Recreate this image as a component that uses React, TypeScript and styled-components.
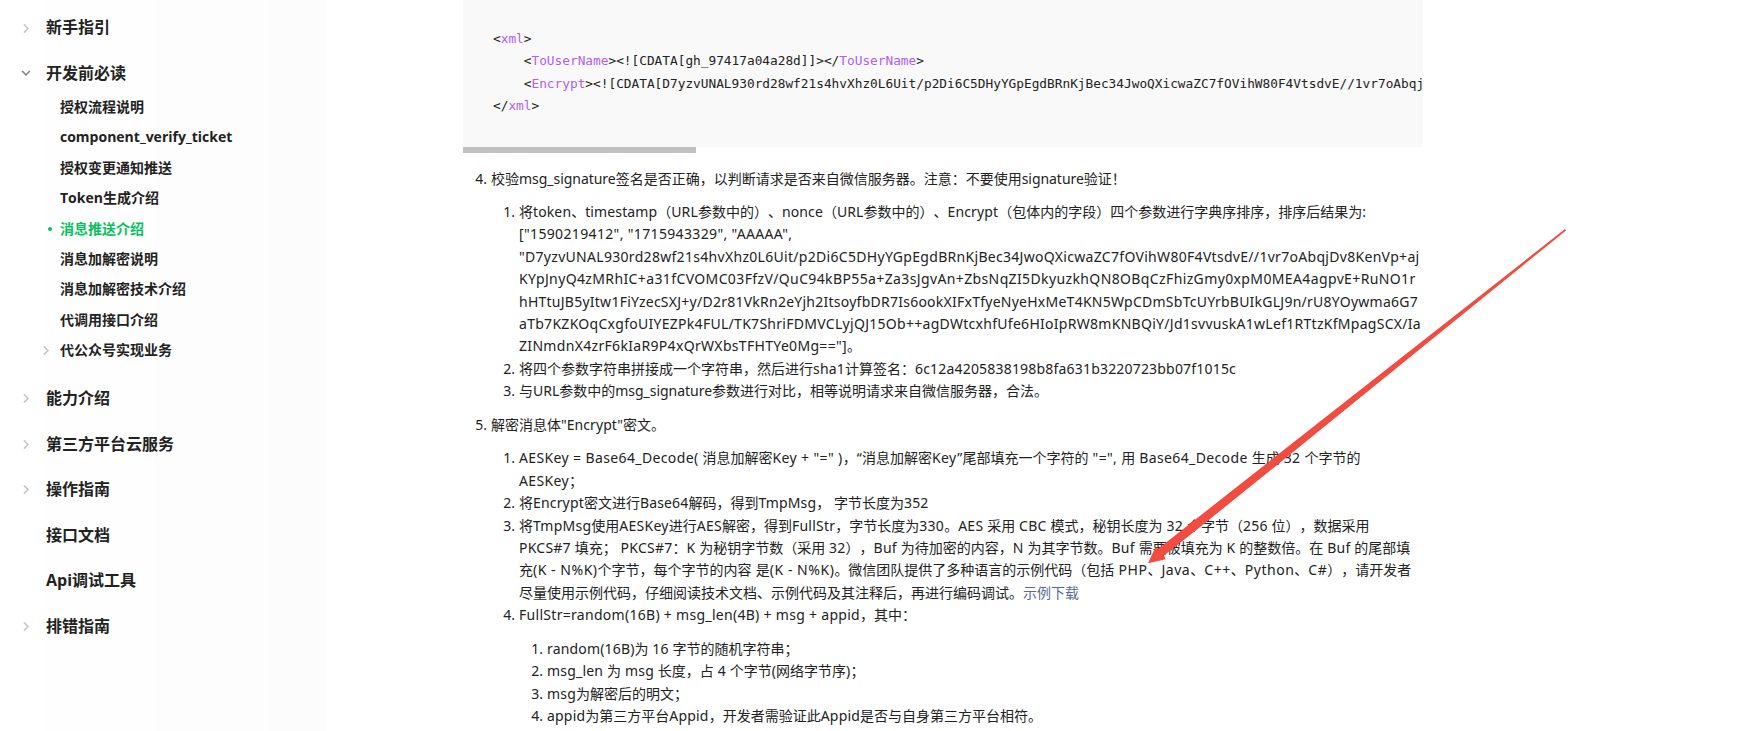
import React from "react";
import styled, { createGlobalStyle } from "styled-components";

type NavChild = { label: string; active?: boolean; arrow?: boolean };
type NavGroup = { label: string; arrow?: "right" | "down"; children?: NavChild[] };

const nav: NavGroup[] = [
  { label: "新手指引", arrow: "right" },
  {
    label: "开发前必读",
    arrow: "down",
    children: [
      { label: "授权流程说明" },
      { label: "component_verify_ticket" },
      { label: "授权变更通知推送" },
      { label: "Token生成介绍" },
      { label: "消息推送介绍", active: true },
      { label: "消息加解密说明" },
      { label: "消息加解密技术介绍" },
      { label: "代调用接口介绍" },
      { label: "代公众号实现业务", arrow: true },
    ],
  },
  { label: "能力介绍", arrow: "right" },
  { label: "第三方平台云服务", arrow: "right" },
  { label: "操作指南", arrow: "right" },
  { label: "接口文档" },
  { label: "Api调试工具" },
  { label: "排错指南", arrow: "right" },
];

// tracking of the latin runs, one value per line
type TextLine = { text: string; track: number; link?: string };
type DocItem = { lines: TextLine[]; items?: DocItem[] };

const one = (text: string, track: number): DocItem => ({ lines: [{ text, track }] });

const signItems: DocItem[] = [
  {
    lines: [
      { text: "将token、timestamp（URL参数中的）、nonce（URL参数中的）、Encrypt（包体内的字段）四个参数进行字典序排序，排序后结果为:", track: 0.123 },
      { text: '["1590219412", "1715943329", "AAAAA",', track: 0.35 },
      { text: '"D7yzvUNAL930rd28wf21s4hvXhz0L6Uit/p2Di6C5DHyYGpEgdBRnKjBec34JwoQXicwaZC7fOVihW80F4VtsdvE//1vr7oAbqjDv8KenVp+aj', track: 0.301 },
      { text: "KYpJnyQ4zMRhIC+a31fCVOMC03FfzV/QuC94kBP55a+Za3sJgvAn+ZbsNqZI5DkyuzkhQN8OBqCzFhizGmy0xpM0MEA4agpvE+RuNO1r", track: 0.376 },
      { text: "hHTtuJB5yItw1FiYzecSXJ+y/D2r81VkRn2eYjh2ItsoyfbDR7Is6ookXIFxTfyeNyeHxMeT4KN5WpCDmSbTcUYrbBUIkGLJ9n/rU8YOywma6G7", track: 0.249 },
      { text: "aTb7KZKOqCxgfoUIYEZPk4FUL/TK7ShriFDMVCLyjQJ15Ob++agDWtcxhfUfe6HIoIpRW8mKNBQiY/Jd1svvuskA1wLef1RTtzKfMpagSCX/Ia", track: 0.284 },
      { text: 'ZINmdnX4zrF6kIaR9P4xQrWXbsTFHTYe0Mg=="]。', track: 0.32 },
    ],
  },
  one("将四个参数字符串拼接成一个字符串，然后进行sha1计算签名：6c12a4205838198b8fa631b3220723bb07f1015c", 0.189),
  one("与URL参数中的msg_signature参数进行对比，相等说明请求来自微信服务器，合法。", -0.028),
];

const decryptItems: DocItem[] = [
  {
    lines: [
      { text: 'AESKey = Base64_Decode( 消息加解密Key + "=" )，“消息加解密Key”尾部填充一个字符的 "=", 用 Base64_Decode 生成 32 个字节的', track: 0.373 },
      { text: "AESKey；", track: 0.359 },
    ],
  },
  one("将Encrypt密文进行Base64解码，得到TmpMsg， 字节长度为352", 0.162),
  {
    lines: [
      { text: "将TmpMsg使用AESKey进行AES解密，得到FullStr，字节长度为330。AES 采用 CBC 模式，秘钥长度为 32 个字节（256 位），数据采用", track: 0.254 },
      { text: "PKCS#7 填充； PKCS#7：K 为秘钥字节数（采用 32），Buf 为待加密的内容，N 为其字节数。Buf 需要被填充为 K 的整数倍。在 Buf 的尾部填", track: 0.234 },
      { text: "充(K - N%K)个字节，每个字节的内容 是(K - N%K)。微信团队提供了多种语言的示例代码（包括 PHP、Java、C++、Python、C#），请开发者", track: 0.533 },
      { text: "尽量使用示例代码，仔细阅读技术文档、示例代码及其注释后，再进行编码调试。", track: 0, link: "示例下载" },
    ],
  },
  {
    lines: [{ text: "FullStr=random(16B) + msg_len(4B) + msg + appid，其中：", track: 0.293 }],
    items: [
      one("random(16B)为 16 字节的随机字符串；", 0.167),
      one("msg_len 为 msg 长度，占 4 个字节(网络字节序)；", 0.206),
      one("msg为解密后的明文；", 0.198),
      one("appid为第三方平台Appid，开发者需验证此Appid是否与自身第三方平台相符。", 0.2),
    ],
  },
];

const steps: DocItem[] = [
  {
    lines: [{ text: "校验msg_signature签名是否正确，以判断请求是否来自微信服务器。注意：不要使用signature验证！", track: -0.04 }],
    items: signItems,
  },
  { lines: [{ text: '解密消息体"Encrypt"密文。', track: 0.061 }], items: decryptItems },
];

const Chevron = ({ down }: { down?: boolean }) => (
  <svg width="10" height="12" viewBox="0 0 10 12" fill="none" strokeWidth="1.6">
    {down ? (
      <path d="M1.1 4L5 7.9L8.9 4" stroke="#858585" />
    ) : (
      <path d="M2.9 2.4L7 6.5L2.9 10.6" stroke="#c8c8c8" />
    )}
  </svg>
);

const MixedText = ({ text, track }: TextLine) => (
  <>
    {text.split(/([\u3000-\u9fff\uff00-\uffef]+)/).map((run, i) =>
      i % 2 ? run : run && <Latin key={i} $track={track}>{run}</Latin>
    )}
  </>
);

const DocList = ({ items, start = 1 }: { items: DocItem[]; start?: number }) => (
  <List>
    {items.map((item, i) => (
      <Item key={i}>
        <Marker>{start + i}.</Marker>
        <div>
          {item.lines.map((line) => (
            <Line key={line.text}>
              <MixedText {...line} />
              {line.link && <DocLink href="#">{line.link}</DocLink>}
            </Line>
          ))}
          {item.items && (
            <Nested>
              <DocList items={item.items} />
            </Nested>
          )}
        </div>
      </Item>
    ))}
  </List>
);

const App = () => {
  return (
    <Page>
      <GlobalStyle />
      <Sidebar>
        {nav.map((group) => (
          <Group key={group.label}>
            <GroupTitle>
              <ArrowSlot>{group.arrow && <Chevron down={group.arrow === "down"} />}</ArrowSlot>
              {group.label}
            </GroupTitle>
            {group.children && (
              <SubList>
                {group.children.map((child) => (
                  <SubItem key={child.label} $active={child.active}>
                    <SubSlot>
                      {child.arrow && <Chevron />}
                      {child.active && <Dot />}
                    </SubSlot>
                    {child.label}
                  </SubItem>
                ))}
              </SubList>
            )}
          </Group>
        ))}
      </Sidebar>
      <Content>
        <CodeBlock>
          <CodeLine>
            &lt;<Tag>xml</Tag>&gt;
          </CodeLine>
          <CodeLine>
            {"    <"}
            <Tag>ToUserName</Tag>
            {"><![CDATA[gh_97417a04a28d]]></"}
            <Tag>ToUserName</Tag>&gt;
          </CodeLine>
          <CodeLine>
            {"    <"}
            <Tag>Encrypt</Tag>
            {"><![CDATA[D7yzvUNAL930rd28wf21s4hvXhz0L6Uit/p2Di6C5DHyYGpEgdBRnKjBec34JwoQXicwaZC7fOVihW80F4VtsdvE//1vr7oAbqj"}
          </CodeLine>
          <CodeLine>
            &lt;/<Tag>xml</Tag>&gt;
          </CodeLine>
        </CodeBlock>
        <ScrollThumb />
        <Steps>
          <DocList items={steps} start={4} />
        </Steps>
      </Content>
      <Arrow width="430" height="345" viewBox="0 0 430 345">
        <path d="M8 343.3L15 328L18.5 328.5L425 9L426 10.5L150 234.5L57 309.5L24 335.5L25.7 339.3Z" fill="#f24b3f" />
      </Arrow>
    </Page>
  );
};

export default App;

const GlobalStyle = createGlobalStyle`
  body {
    margin: 0;
    background: #fff;
    overflow: hidden;
  }
`;

const Page = styled.div`
  position: relative;
  display: flex;
  width: 1763px;
  height: 731px;
  overflow: hidden;
  color: #222;
  font-family: "Noto Sans", "Noto Sans CJK SC", sans-serif;
  font-size: 14px;
  line-height: 22.4px;
  text-spacing-trim: space-all;
`;

const Sidebar = styled.nav`
  box-sizing: border-box;
  width: 326px;
  padding-top: 14.8px;
  background: linear-gradient(
    90deg,
    #fff 43px,
    #fefefe 43px 156px,
    #fdfdfd 156px 269px,
    #fcfcfc 269px
  );
  font-family: "Open Sans", "Noto Sans CJK SC", sans-serif;
  font-weight: 700;
`;

const Group = styled.div`
  margin-bottom: 20px;
`;

const GroupTitle = styled.div`
  display: flex;
  align-items: center;
  height: 25.6px;
  font-size: 16px;
`;

const ArrowSlot = styled.span`
  display: flex;
  box-sizing: border-box;
  width: 46px;
  padding-left: 21px;
`;

const SubList = styled.div`
  padding-top: 6px;
`;

const SubItem = styled.div<{ $active?: boolean }>`
  display: flex;
  align-items: center;
  height: 30.4px;
  color: ${({ $active }) => ($active ? "#07c160" : "inherit")};
`;

const SubSlot = styled.span`
  display: flex;
  box-sizing: border-box;
  width: 60px;
  padding-left: 41px;
`;

const Dot = styled.i`
  width: 4px;
  height: 4px;
  margin-left: 7px;
  border-radius: 50%;
  background: #07c160;
`;

const Content = styled.main`
  width: 960px;
  margin-left: 137px;
`;

const CodeBlock = styled.pre`
  box-sizing: border-box;
  height: 147px;
  margin: 0;
  padding: 28px 30px 0;
  overflow: hidden;
  background: #f9f9f9;
  font-family: "DejaVu Sans Mono", monospace;
  font-size: 12.79px;
`;

const CodeLine = styled.div`
  height: 22.4px;
  line-height: 22.4px;
`;

const Tag = styled.span`
  color: #b35cff;
`;

const ScrollThumb = styled.div`
  width: 233px;
  height: 6px;
  background: #c1c1c1;
`;

const Steps = styled.section`
  padding-top: 14.5px;
`;

const List = styled.div`
  display: flex;
  flex-direction: column;
`;

const Item = styled.div`
  display: flex;
`;

const Marker = styled.span`
  box-sizing: border-box;
  flex: none;
  width: 28px;
  padding-right: 4px;
  text-align: right;
`;

const Line = styled.div`
  height: 22.4px;
  white-space: pre;
`;

const Nested = styled.div`
  padding: 11.2px 0;
`;

const Latin = styled.span<{ $track: number }>`
  letter-spacing: ${({ $track }) => $track}px;
`;

const DocLink = styled.a`
  color: #576b95;
  text-decoration: none;
`;

/* annotation drawn over the article */
const Arrow = styled.svg`
  position: absolute;
  left: 1140px;
  top: 220px;
`;
